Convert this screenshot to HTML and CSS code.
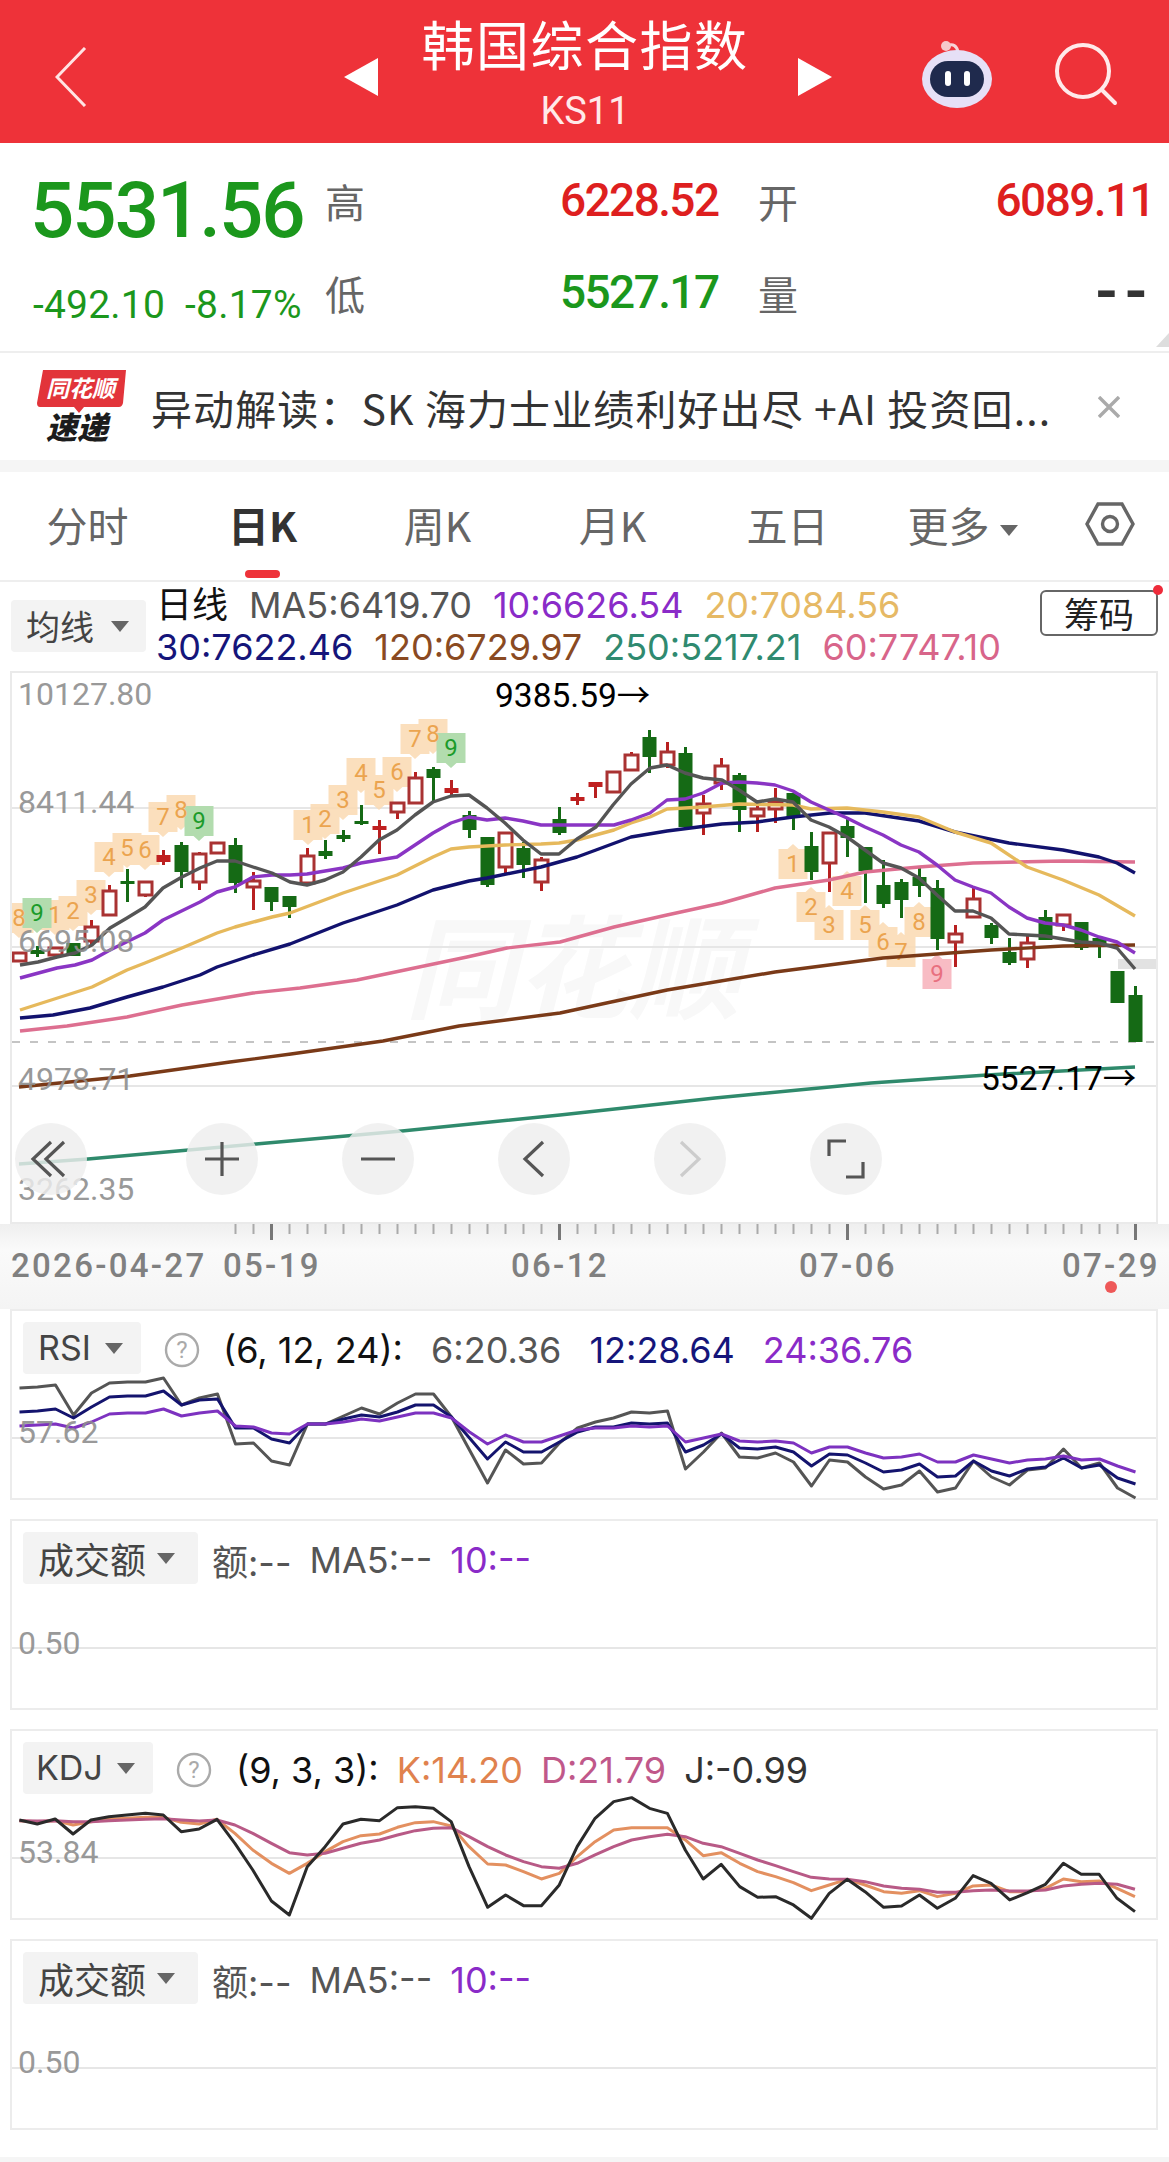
FILE: index.html
```html
<!DOCTYPE html>
<html lang="zh">
<head>
<meta charset="utf-8">
<title>韩国综合指数</title>
<link rel="stylesheet" href="styles.css">
</head>
<body>
<div class="page">
<header class="bar">
  <svg class="back" viewBox="0 0 32 60"><path d="M30 1 2 30l28 29"/></svg>
  <svg class="tri" viewBox="0 0 34 38"><path d="M34 0v38L0 19z"/></svg>
  <div class="title"><div class="name">韩国综合指数</div><div class="code">KS11</div></div>
  <svg class="tri" viewBox="0 0 34 38"><path d="M0 0v38l34-19z"/></svg>
  <svg class="robot" viewBox="0 0 72 72">
    <path class="ant" d="M26 8c6-3 10 0 11 6"/><circle class="ball" cx="25" cy="8" r="5"/>
    <ellipse class="helm" cx="36" cy="41" rx="35" ry="29"/>
    <rect class="face" x="9" y="23" width="54" height="36" rx="18"/>
    <rect class="eye" x="24" y="33" width="6" height="15" rx="3"/><rect class="eye" x="43" y="33" width="6" height="15" rx="3"/>
  </svg>
  <svg class="search" viewBox="0 0 64 64"><circle cx="28" cy="28" r="26"/><path d="m47 47 13 13"/></svg>
</header>

<section class="quote">
  <div class="price down">5531.56</div><div class="qk">高</div><div class="qv up">6228.52</div><div class="qk">开</div><div class="qv up right">6089.11</div>
  <div class="chg down"><span>-492.10</span><span>-8.17%</span></div><div class="qk">低</div><div class="qv down">5527.17</div><div class="qk">量</div><div class="qv dash right">--</div>
  <div class="corner"></div>
</section>

<section class="news">
  <svg class="logo" viewBox="0 0 90 72">
    <path class="logo-red" d="M6 0h83l-3 33q-1 4-4 4H47l-5 6-5-6H3q-3 0-3-4z"/>
    <text class="logo-a" x="9" y="27">同花顺</text><text class="logo-b" x="9" y="69">速递</text>
  </svg>
  <div class="news-text">异动解读：SK 海力士业绩利好出尽 +AI 投资回...</div>
  <svg class="close" viewBox="0 0 22 22"><path d="m1 1 20 20M21 1 1 21"/></svg>
</section>
<div class="strip"></div>

<nav class="tabs">
  <div class="tab">分时</div>
  <div class="tab on">日K<i class="mark"></i></div>
  <div class="tab">周K</div>
  <div class="tab">月K</div>
  <div class="tab">五日</div>
  <div class="tab">更多<b class="caret"></b></div>
  <svg class="hex" viewBox="0 0 50 44"><path d="M13 2h24l11 20-11 20H13L2 22z"/><circle cx="25" cy="22" r="7.5"/></svg>
</nav>

<section class="legend">
  <div class="drop d-ma">均线<b class="caret"></b></div>
  <div class="ma">
    <div class="ma-line"><span class="ink">日线</span><span class="c5">MA5:6419.70</span><span class="c10">10:6626.54</span><span class="c20">20:7084.56</span></div>
    <div class="ma-line"><span class="c30">30:7622.46</span><span class="c120">120:6729.97</span><span class="c250">250:5217.21</span><span class="c60">60:7747.10</span></div>
  </div>
  <div class="chip">筹码<i class="dot"></i></div>
</section>

<section class="chart">
<svg class="plot" viewBox="12 673 1144 549">
  <text class="wm" x="405" y="1010">同花顺</text>
  <path class="grid" d="M12 808H1156M12 947H1156M12 1086H1156"/>
  <path class="dashed" d="M12 1042H1156"/>
  <rect class="tag" x="1118" y="959" width="38" height="10"/>

  <g>
    <path class="b-o" d="M40.500 900h29v30h-9l-5.500 5-5.500-5h-9zM58.500 896h29v30h-9l-5.500 5-5.500-5h-9zM76.500 880h29v30h-9l-5.500 5-5.500-5h-9zM94.500 842h29v30h-9l-5.500 5-5.500-5h-9zM112.500 833h29v30h-9l-5.500 5-5.500-5h-9zM130.500 835h29v30h-9l-5.500 5-5.500-5h-9zM148.500 802h29v30h-9l-5.500 5-5.500-5h-9zM166.500 795h29v30h-9l-5.500 5-5.500-5h-9zM12 903h21.500v30h-9l-5.500 5-5.500-5H12zM293.500 810h29v30h-9l-5.500 5-5.500-5h-9zM310.500 804h29v30h-9l-5.500 5-5.500-5h-9zM328.500 785h29v30h-9l-5.500 5-5.500-5h-9zM346.500 758h29v30h-9l-5.500 5-5.500-5h-9zM364.500 775h29v30h-9l-5.500 5-5.500-5h-9zM382.500 757h29v30h-9l-5.500 5-5.500-5h-9zM400.500 724h29v30h-9l-5.500 5-5.500-5h-9zM418.500 719h29v30h-9l-5.500 5-5.500-5h-9zM778.500 879h29v-30h-9l-5.500-5-5.500 5h-9zM796.500 922h29v-30h-9l-5.500-5-5.500 5h-9zM814.500 940h29v-30h-9l-5.500-5-5.500 5h-9zM832.500 906h29v-30h-9l-5.500-5-5.500 5h-9zM850.500 940h29v-30h-9l-5.500-5-5.500 5h-9zM868.500 957h29v-30h-9l-5.500-5-5.500 5h-9zM886.500 967h29v-30h-9l-5.500-5-5.500 5h-9zM904.500 937h29v-30h-9l-5.500-5-5.500 5h-9z"/>
    <path class="b-g" d="M22.500 898h29v30h-9l-5.500 5-5.500-5h-9zM184.500 806h29v30h-9l-5.500 5-5.500-5h-9zM436.500 733h29v30h-9l-5.500 5-5.500-5h-9z"/>
    <path class="b-p" d="M922.500 989h29v-30h-9l-5.500-5-5.500 5h-9z"/>
    <text class="t-o" x="19" y="926">8</text><text class="t-o" x="55" y="923">1</text><text class="t-o" x="73" y="919">2</text><text class="t-o" x="91" y="903">3</text><text class="t-o" x="109" y="865">4</text><text class="t-o" x="127" y="856">5</text><text class="t-o" x="145" y="858">6</text><text class="t-o" x="163" y="825">7</text><text class="t-o" x="181" y="818">8</text>
    <text class="t-o" x="308" y="833">1</text><text class="t-o" x="325" y="827">2</text><text class="t-o" x="343" y="808">3</text><text class="t-o" x="361" y="781">4</text><text class="t-o" x="379" y="798">5</text><text class="t-o" x="397" y="780">6</text><text class="t-o" x="415" y="747">7</text><text class="t-o" x="433" y="742">8</text>
    <text class="t-o" x="793" y="872">1</text><text class="t-o" x="811" y="915">2</text><text class="t-o" x="829" y="933">3</text><text class="t-o" x="847" y="899">4</text><text class="t-o" x="865" y="933">5</text><text class="t-o" x="883" y="950">6</text><text class="t-o" x="901" y="960">7</text><text class="t-o" x="919" y="930">8</text>
    <text class="t-g" x="37" y="921">9</text><text class="t-g" x="199" y="829">9</text><text class="t-g" x="451" y="756">9</text><text class="t-p" x="937" y="982">9</text>
  </g>

  <path class="w-g" d="M37.500 946V957M127.500 869V902M181.500 842V888M235.500 838V893M271.500 887V911M289.500 896V918M325.500 840V859M343.500 830V842M361.500 805V825M433.500 767V802M469.500 811V838M487.500 837V887M523.500 842V878M559.500 807V835M649.500 730V773M685.500 747V827M739.500 773V832M793.500 793V830M811.500 832V880M847.500 818V857M865.500 847V903M883.500 860V908M901.500 879V918M919.500 868V897M937.500 880V950M991.500 923V944M1009.500 938V965M1045.500 910V940M1081.500 922V950M1099.500 938V958M1135.500 986V1042"/>
  <path class="c-g" d="M30.500 950h14v4h-14zM66.500 943h14v13h-14zM120.500 881h14v3h-14zM174.500 845h14v27h-14zM228.500 845h14v38h-14zM264.500 887h14v15h-14zM282.500 896h14v11h-14zM318.500 851h14v5h-14zM336.500 835h14v4h-14zM354.500 821h14v3h-14zM426.500 769h14v9h-14zM462.500 815h14v15h-14zM480.500 837h14v48h-14zM516.500 848h14v17h-14zM552.500 819h14v14h-14zM642.500 737h14v20h-14zM678.500 753h14v74h-14zM732.500 775h14v35h-14zM786.500 793h14v24h-14zM804.500 846h14v26h-14zM840.500 826h14v12h-14zM858.500 847h14v24h-14zM876.500 885h14v19h-14zM894.500 882h14v18h-14zM912.500 877h14v9h-14zM930.500 888h14v51h-14zM984.500 925h14v13h-14zM1002.500 952h14v11h-14zM1038.500 917h14v23h-14zM1074.500 922h14v26h-14zM1092.500 938h14v7h-14zM1110.500 971h14v32h-14zM1128.500 995h14v47h-14z"/>
  <path class="w-r" d="M91.500 920V945M109.500 885V915M145.500 882V897M199.500 852V890M253.500 872V910M307.500 848V883M397.500 803V819M415.500 772V803M505.500 833V873M541.500 857V891M631.500 752V770M667.500 742V768M703.500 795V835M721.500 758V790M757.500 802V832M775.500 788V823M829.500 832V892M955.500 925V967M973.500 888V917M1027.500 935V968M1063.500 915V931M163.500 850V865M379.500 820V854M451.500 780V795M577.500 793V805M595.500 782V798"/>
  <path class="c-r" d="M13 953h13v8H13zM49 948h13v7H49zM85 927h13v14H85zM103 891h13v24h-13zM139 882h13v13h-13zM193 854h13v28h-13zM211 843h13v10h-13zM247 881h13v6h-13zM301 856h13v27h-13zM391 803h13v9h-13zM409 778h13v25h-13zM499 833h13v34h-13zM535 860h13v22h-13zM607 772h13v20h-13zM625 755h13v15h-13zM661 752h13v13h-13zM697 804h13v9h-13zM715 766h13v17h-13zM751 809h13v7h-13zM769 802h13v7h-13zM823 833h13v30h-13zM949 934h13v8h-13zM967 899h13v18h-13zM1021 943h13v16h-13zM1057 915h13v10h-13z"/>
  <path class="c-s" d="M156.500 855h14v7h-14zM372.500 826h14v4h-14zM444.500 788h14v5h-14zM570.500 797h14v4h-14zM588.500 782h14v5h-14z"/>

  <polyline class="l l250" points="19,1164 88,1159 256,1144 402,1131 560,1115 715,1098 871,1083 987,1075 1135,1067"/>
  <polyline class="l l120" points="19,1087 130,1076 230,1062 291,1054 383,1041 459,1026 560,1013 667,990 775,972 883,958 991,950 1063,946 1135,945"/>
  <polyline class="l l60" points="20,1031 67,1026 127,1017 182,1005 253,993 300,988 357,980 467,957 507,948 560,942 614,927 667,915 722,903 775,888 829,880 865,872 919,867 973,863 1063,861 1135,862"/>
  <polyline class="l l30" points="20,1018 53,1015 90,1008 127,997 163,987 200,975 217,967 253,955 290,944 343,923 397,905 433,890 469,881 487,878 541,867 577,857 596,850 631,837 667,831 722,824 757,822 793,817 830,813 865,813 919,821 955,832 1009,843 1063,850 1099,857 1117,863 1135,873"/>
  <polyline class="l l20" points="20,1010 92,987 127,970 145,963 182,948 217,933 235,927 272,917 290,913 343,893 397,875 433,857 451,849 469,847 505,845 541,844 559,843 577,840 614,830 631,823 650,817 667,809 703,807 739,804 793,805 811,809 847,808 883,812 919,817 955,832 991,843 1027,867 1063,880 1099,895 1135,916"/>
  <polyline class="l l10" points="20,978 57,968 75,965 92,960 110,950 145,933 163,920 200,902 217,892 235,887 253,877 272,875 290,875 307,874 343,868 361,863 397,857 415,845 433,833 451,823 469,817 487,820 505,818 523,821 541,825 559,825 596,825 614,825 631,820 650,813 667,800 685,799 703,793 722,783 739,782 757,783 775,785 793,791 811,802 829,810 847,818 865,827 883,835 901,845 919,852 937,865 955,880 973,887 991,893 1009,907 1027,918 1045,923 1063,925 1081,930 1099,937 1117,942 1135,953"/>
  <polyline class="l l5" points="20,965 38,962 57,957 75,953 92,945 110,928 127,918 145,907 163,888 182,877 200,868 217,861 235,861 253,867 272,873 290,882 307,885 325,880 343,872 361,857 379,840 397,830 415,815 433,802 451,796 469,795 487,808 505,823 523,840 541,854 559,854 577,839 596,827 613,805 631,784 650,768 667,765 685,773 703,778 722,780 739,790 757,802 775,799 793,802 811,820 829,827 847,837 865,850 883,863 901,868 919,878 937,895 955,911 973,911 991,918 1009,934 1027,935 1045,936 1063,939 1081,942 1099,943 1117,948 1135,969"/>

  <text class="ax" x="18" y="705">10127.80</text>
  <text class="ax" x="18" y="813">8411.44</text>
  <text class="ax" x="18" y="952">6695.08</text>
  <text class="ax" x="18" y="1090">4978.71</text>
  <text class="ax" x="18" y="1200">3262.35</text>
  <text class="hl" x="495" y="707">9385.59→</text>
  <text class="hl" x="981" y="1090">5527.17→</text>
</svg>
<div class="nav">
  <div class="nav-b first"><svg viewBox="0 0 72 72"><path d="M36 19 18 36l18 17M49 19 31 36l18 17"/></svg></div>
  <div class="nav-b"><svg viewBox="0 0 72 72"><path d="M36 19v34M19 36h34"/></svg></div>
  <div class="nav-b"><svg viewBox="0 0 72 72"><path d="M19 36h34"/></svg></div>
  <div class="nav-b"><svg viewBox="0 0 72 72"><path d="M45 19 27 36l18 17"/></svg></div>
  <div class="nav-b off"><svg viewBox="0 0 72 72"><path d="M27 19l18 17-18 17"/></svg></div>
  <div class="nav-b"><svg viewBox="0 0 72 72"><path d="M19 33V18h17M53 39v15H36"/></svg></div>
</div>
</section>

<section class="axis">
<svg viewBox="0 1224 1169 85">
  <path class="tk" d="M235.500 1224v10M253.500 1224v10M289.500 1224v10M307.500 1224v10M325.500 1224v10M343.500 1224v10M361.500 1224v10M379.500 1224v10M397.500 1224v10M415.500 1224v10M433.500 1224v10M451.500 1224v10M469.500 1224v10M487.500 1224v10M505.500 1224v10M523.500 1224v10M541.500 1224v10M577.500 1224v10M595.500 1224v10M613.500 1224v10M631.500 1224v10M649.500 1224v10M667.500 1224v10M685.500 1224v10M703.500 1224v10M721.500 1224v10M739.500 1224v10M757.500 1224v10M775.500 1224v10M793.500 1224v10M811.500 1224v10M829.500 1224v10M865.500 1224v10M883.500 1224v10M901.500 1224v10M919.500 1224v10M937.500 1224v10M955.500 1224v10M973.500 1224v10M991.500 1224v10M1009.500 1224v10M1027.500 1224v10M1045.500 1224v10M1063.500 1224v10M1081.500 1224v10M1099.500 1224v10M1117.500 1224v10"/>
  <path class="tk-m" d="M271.500 1224v16M559.500 1224v16M847.500 1224v16M1135.500 1224v16"/>
  <text class="dt" x="11" y="1277">2026-04-27</text>
  <text class="dt" x="223" y="1277">05-19</text>
  <text class="dt" x="511" y="1277">06-12</text>
  <text class="dt" x="799" y="1277">07-06</text>
  <text class="dt" x="1062" y="1277">07-29</text>
  <circle class="rd" cx="1111" cy="1287" r="6"/>
</svg>
</section>

<section class="panels">
<div class="panel">
  <div class="phead rsi">
    <div class="drop d-rsi">RSI<b class="caret"></b></div>
    <svg class="help" viewBox="0 0 36 36"><circle cx="18" cy="18" r="16"/><text x="18" y="26">?</text></svg>
    <span class="ink">(6, 12, 24):</span><span class="c5">6:20.36</span><span class="c30">12:28.64</span><span class="c10">24:36.76</span>
  </div>
  <svg class="sub" viewBox="12 1378 1144 120">
    <path class="grid" d="M12 1438H1156"/>
    <polyline class="s sg" points="19.5,1388 37.5,1387 55.5,1385 73.5,1415 91.5,1393 109.500,1383 127.500,1382 145.500,1382 163.500,1378 181.500,1405 199.500,1398 217.500,1394 235.500,1444 253.500,1443 271.500,1461 289.500,1465 307.500,1424 325.500,1424 343.500,1416 361.500,1408 379.500,1414 397.500,1403 415.500,1394 433.500,1394 451.500,1417 469.500,1450 487.500,1483 505.500,1450 523.500,1464 541.500,1463 559.500,1443 577.500,1428 595.500,1422 613.5,1418 631.5,1412 649.5,1413 667.5,1411 685.5,1469 703.5,1452 721.5,1433 739.5,1457 757.5,1458 775.5,1453 793.5,1462 811.5,1486 829.5,1460 847.5,1462 865.5,1477 883.5,1489 901.5,1485 919.5,1471 937.5,1492 955.5,1488 973.5,1461 991.5,1477 1009.5,1485 1027.5,1470 1045.5,1468 1063.5,1449 1081.5,1468 1099.5,1463 1117.5,1488 1135.5,1498"/>
    <polyline class="s sn" points="19.5,1412 37.5,1411 55.5,1409 73.5,1418 91.5,1407 109.5,1397 127.5,1396 145.5,1396 163.5,1391 181.5,1405 199.5,1400 217.5,1399 235.5,1428 253.5,1428 271.5,1439 289.5,1443 307.5,1424 325.5,1424 343.5,1419 361.5,1415 379.5,1417 397.5,1412 415.5,1405 433.5,1405 451.5,1417 469.5,1438 487.5,1459 505.5,1442 523.5,1452 541.5,1452 559.5,1442 577.5,1432 595.5,1427 613.5,1427 631.5,1423 649.5,1424 667.5,1423 685.5,1452 703.5,1445 721.5,1434 739.5,1448 757.5,1449 775.5,1447 793.5,1452 811.5,1466 829.5,1454 847.5,1455 865.5,1463 883.5,1472 901.5,1470 919.5,1464 937.5,1477 955.5,1476 973.5,1461 991.5,1471 1009.5,1476 1027.5,1469 1045.5,1467 1063.5,1458 1081.5,1468 1099.5,1465 1117.5,1478 1135.5,1484"/>
    <polyline class="s sp" points="19.5,1426 37.5,1425 55.5,1424 73.5,1428 91.5,1422 109.5,1414 127.5,1413 145.5,1413 163.5,1409 181.5,1416 199.5,1413 217.5,1411 235.5,1426 253.5,1427 271.5,1433 289.5,1434 307.5,1424 325.5,1424 343.5,1422 361.5,1419 379.5,1421 397.5,1417 415.5,1413 433.5,1413 451.5,1418 469.5,1432 487.5,1444 505.5,1435 523.5,1442 541.5,1442 559.5,1436 577.5,1430 595.5,1428 613.5,1428 631.5,1426 649.5,1427 667.5,1426 685.5,1442 703.5,1438 721.5,1434 739.5,1441 757.5,1442 775.5,1441 793.5,1443 811.5,1453 829.5,1447 847.5,1447 865.5,1453 883.5,1458 901.5,1457 919.5,1454 937.5,1462 955.5,1462 973.5,1455 991.5,1459 1009.5,1463 1027.5,1460 1045.5,1459 1063.5,1456 1081.5,1460 1099.5,1459 1117.5,1466 1135.5,1472"/>
    <text class="ax" x="18" y="1443">57.62</text>
  </svg>
</div>

<div class="panel">
  <div class="phead vol">
    <div class="drop d-vol">成交额<b class="caret"></b></div>
    <span class="c5">额:--</span><span class="c5">MA5:--</span><span class="c10">10:--</span>
  </div>
  <svg class="sub" viewBox="12 1588 1144 120">
    <path class="grid" d="M12 1648H1156"/>
    <text class="ax" x="18" y="1654">0.50</text>
  </svg>
</div>

<div class="panel">
  <div class="phead kdj">
    <div class="drop d-kdj">KDJ<b class="caret"></b></div>
    <svg class="help" viewBox="0 0 36 36"><circle cx="18" cy="18" r="16"/><text x="18" y="26">?</text></svg>
    <span class="ink">(9, 3, 3):</span><span class="ck">K:14.20</span><span class="cd">D:21.79</span><span class="cj">J:-0.99</span>
  </div>
  <svg class="sub" viewBox="12 1798 1144 120">
    <path class="grid" d="M12 1858H1156"/>
    <g transform="translate(0 1700) scale(.7457 .3333)">
      <polyline class="s kk" vector-effect="non-scaling-stroke" points="26,362 50,365 74,362 98,375 122,365 146,358 170,355 195,352 219,352 243,367 267,372 291,358 315,400 339,450 364,490 388,520 412,490 436,455 460,425 484,407 509,402 533,382 557,368 581,365 605,378 629,440 654,492 678,495 702,515 726,537 750,520 774,470 798,425 823,390 847,383 871,383 895,383 919,420 943,467 967,458 992,490 1016,515 1040,530 1064,548 1088,572 1112,555 1136,538 1160,555 1185,575 1209,580 1233,572 1257,590 1281,580 1305,558 1329,555 1354,575 1378,575 1402,565 1426,537 1450,545 1474,543 1498,565 1522,590"/>
      <polyline class="s kd" vector-effect="non-scaling-stroke" points="26,362 50,363 74,362 98,365 122,365 146,362 170,360 195,358 219,356 243,360 267,363 291,360 315,375 339,400 364,430 388,458 412,465 436,460 460,445 484,430 509,420 533,405 557,392 581,385 605,383 629,410 654,440 678,465 702,485 726,500 750,505 774,490 798,465 823,440 847,420 871,410 895,403 919,410 943,430 967,440 992,460 1016,480 1040,497 1064,515 1088,532 1112,537 1136,538 1160,545 1185,558 1209,565 1233,568 1257,577 1281,577 1305,572 1329,570 1354,573 1378,573 1402,570 1426,558 1450,553 1474,550 1498,553 1522,568"/>
      <polyline class="s kj" vector-effect="non-scaling-stroke" points="26,360 50,372 74,357 98,402 122,360 146,350 170,345 195,340 219,345 243,395 267,387 291,358 315,430 339,510 364,603 388,645 412,500 436,440 460,372 484,358 509,362 533,323 557,320 581,325 605,365 629,500 654,622 678,585 702,617 726,617 750,555 774,440 798,355 823,305 847,293 871,325 895,340 919,450 943,537 967,493 992,560 1016,592 1040,590 1064,615 1088,655 1112,580 1136,538 1160,575 1185,622 1209,618 1233,585 1257,625 1281,595 1305,527 1329,550 1354,600 1378,578 1402,553 1426,490 1450,523 1474,523 1498,595 1522,635"/>
    </g>
    <text class="ax" x="18" y="1863">53.84</text>
  </svg>
</div>

<div class="panel">
  <div class="phead vol">
    <div class="drop d-vol">成交额<b class="caret"></b></div>
    <span class="c5">额:--</span><span class="c5">MA5:--</span><span class="c10">10:--</span>
  </div>
  <svg class="sub" viewBox="12 2008 1144 120">
    <path class="grid" d="M12 2068H1156"/>
    <text class="ax" x="18" y="2073">0.50</text>
  </svg>
</div>
</section>
<div class="foot"></div>
<div class="tail"></div>
</div>
</body>
</html>
```
FILE: styles.css
```css
*{box-sizing:border-box}
html,body{margin:0;padding:0;background:#fff}
body{font-family:"Inter","Noto Sans CJK SC",sans-serif;color:#222}
.page{width:1169px;height:2162px;overflow:hidden;background:#fff}
svg text{font-family:"Roboto","Noto Sans CJK SC",sans-serif}

.bar{height:143px;background:#ee3239;display:flex;align-items:center}
.back{width:32px;height:60px;margin:10px 0 0 55px;flex:none}
.back path{fill:none;stroke:#ffe4e4;stroke-width:3}
.tri{width:34px;height:38px;margin-top:10px;flex:none}
.tri:nth-of-type(2){margin-left:257px}
.tri path{fill:#fff}
.title{width:420px;padding-right:6px;text-align:center;color:#fff;align-self:flex-start}
.name{font:400 53px/60px "Noto Sans CJK SC",sans-serif;margin-top:13px;letter-spacing:1.500px}
.code{font:400 38px/46px "Roboto",sans-serif;color:#ffe9e9;margin-top:15px}
.robot{width:72px;height:72px;margin:4px 0 0 89px;flex:none}
.ant{fill:none;stroke:#f7d4d8;stroke-width:3}
.ball{fill:#f6c9cc}
.helm{fill:#e6e0f6}
.face{fill:#1f2a4d}
.eye{fill:#fff}
.search{width:64px;height:64px;margin:6px 0 0 62px;flex:none}
.search circle,.search path{fill:none;stroke:#ffeaea;stroke-width:4;stroke-linecap:round}

.quote{position:relative;height:210px;padding:12px 15px 0 30px;display:grid;grid-template-columns:295px 235px 198px 50px 1fr;grid-template-rows:92px 92px;border-bottom:2px solid #eee;align-items:center}
.price{font:500 78px/92px "Roboto",sans-serif;letter-spacing:-2px;margin-top:20px}
.chg{font:400 39px/40px "Roboto",sans-serif;display:flex;gap:20px;margin:24px 0 0 3px;letter-spacing:.2px;white-space:nowrap}
.qk{font:400 40px/48px "Noto Sans CJK SC",sans-serif;color:#666}
.qv{font:500 46px/50px "Roboto",sans-serif;letter-spacing:-1.600px;margin-top:-2px}
.right{text-align:right}
.up{color:#de1f1f}
.down{color:#1b971c}
.dash{font-size:60px;font-weight:700;color:#333;letter-spacing:6px;line-height:50px}
.corner{position:absolute;right:0;bottom:4px;width:0;height:0;border-left:13px solid transparent;border-bottom:14px solid #ddd}

.news{height:107px;display:flex;align-items:center;padding-left:37px}
.logo{width:90px;height:72px;flex:none;margin-top:-2px;overflow:visible}
.logo-red{fill:#e2343a}
.logo-a{font-size:23px;font-weight:700;font-style:italic;fill:#fff}
.logo-b{font-size:31px;font-weight:900;font-style:italic;fill:#1c1c1c}
.news-text{font:400 41px/50px "Noto Sans CJK SC",sans-serif;color:#333;margin-left:24px;width:925px;white-space:nowrap;letter-spacing:1.100px}
.close{width:22px;height:22px;margin-left:22px;flex:none}
.close path{stroke:#aaa;stroke-width:3.400;fill:none}
.strip{height:12px;background:#f5f5f5}

.tabs{height:110px;display:flex;border-bottom:2px solid #eee;align-items:center}
.tab{position:relative;width:175px;text-align:center;font:400 41px/50px "Noto Sans CJK SC",sans-serif;color:#666;margin-top:-4px}
.tab.on{font-weight:700;color:#333}
.mark{position:absolute;left:70px;top:71px;width:35px;height:8px;border-radius:4px;background:#ee3239}
.caret{display:inline-block;width:0;height:0;border:9px solid transparent;border-top:11px solid #666;border-bottom:0;margin-left:10px;vertical-align:middle}
.hex{width:50px;height:44px;margin:-5px 0 0 35px;flex:none}
.hex path,.hex circle{fill:none;stroke:#666;stroke-width:3.400}

.legend{height:89px;display:flex;position:relative;padding-left:11px}
.drop{height:52px;background:#f3f3f3;border-radius:4px;display:flex;align-items:center;font:400 34px/40px "Noto Sans CJK SC",sans-serif;color:#444;flex:none}
.drop .caret{border-top-color:#666}
.d-ma{width:135px;margin-top:18px;padding-left:15px}
.d-ma .caret{margin-left:17px}
.ma{margin-left:10px;font-size:36px;line-height:42px;margin-top:2px;white-space:nowrap}
.ma-line{display:flex;gap:21px}
.ink{color:#111}
.c5{color:#555}.c10{color:#8a2bc8}.c20{color:#e6b965}.c30{color:#15157a}.c120{color:#8a4a22}.c250{color:#2f8a70}.c60{color:#d8658a}
.ck{color:#e0824e}.cd{color:#c0588a}.cj{color:#333}
.chip{position:absolute;left:1040px;top:8px;width:118px;height:46px;border:2px solid #666;border-radius:6px;font:400 35px/42px "Noto Sans CJK SC",sans-serif;text-align:center;color:#222}
.dot{position:absolute;right:-7px;top:-7px;width:10px;height:10px;border-radius:50%;background:#ee2b3a}

.chart{position:relative;width:1148px;height:553px;margin-left:10px;border:2px solid #eaeaea}
.plot{display:block;width:1144px;height:549px}
.wm{font:italic 700 112px "Noto Sans CJK SC",sans-serif;fill:#f8f8f8}
.grid{stroke:#e6e6e6;stroke-width:2;fill:none}
.dashed{stroke:#c4c4c4;stroke-width:2;stroke-dasharray:8 10;fill:none}
.tag{fill:#e2e2e2}
.b-o{fill:#fad9b2;opacity:.85}
.b-g{fill:#b2dcae}
.b-p{fill:#f8bcc4}
.t-o,.t-g,.t-p{font-size:24px;text-anchor:middle}
.t-o{fill:#eba44f}.t-g{fill:#1b9b2a}.t-p{fill:#e8707f}
.w-g{stroke:#156a15;stroke-width:3;fill:none}
.c-g{fill:#156a15}
.w-r{stroke:#b82020;stroke-width:3;fill:none}
.c-r{fill:#fff;stroke:#a93232;stroke-width:3}
.c-s{fill:#c02020}
.l{fill:none;stroke-width:3.400;stroke-linejoin:round}
.l5{stroke:#555}.l10{stroke:#8a35c4}.l20{stroke:#e6b95c}.l30{stroke:#12126e}.l60{stroke:#dd6f90}.l120{stroke:#7a3a18}.l250{stroke:#2f8a6c}
.ax{font-size:32px;fill:#8f8f8f;opacity:.9}
.hl{font-size:33.500px;fill:#000}

.nav{position:absolute;left:3px;top:450px;display:flex;gap:84px}
.nav-b{width:72px;height:72px;border-radius:50%;background:rgba(238,238,238,.82)}
.nav-b.first{margin-right:15px}
.nav-b svg{display:block;width:72px;height:72px}
.nav-b path{fill:none;stroke:#555;stroke-width:3.200}
.nav-b.off path{stroke:#ccc}

.axis{height:85px;background:linear-gradient(#efefef,#fafafa 30%,#f4f4f4)}
.axis svg{display:block;width:1169px;height:85px}
.tk{stroke:#aaa;stroke-width:2;fill:none}
.tk-m{stroke:#777;stroke-width:3;fill:none}
.dt{font-size:33px;font-weight:500;fill:#808080;letter-spacing:2.300px}
.rd{fill:#ee5858}

.panels{display:flex;flex-direction:column;gap:19px;margin-left:10px;width:1148px}
.panel{height:191px;border:2px solid #ececec}
.phead{height:67px;padding:11px 0 0 11px;display:flex;align-items:center;font-size:36px;white-space:nowrap}
.rsi{gap:28px}
.vol,.kdj{gap:18px}
.phead .drop{align-self:flex-start}
.d-rsi{width:118px;padding-left:15px;font-family:"Inter",sans-serif;font-size:34px}
.d-kdj{width:130px;padding-left:13px;font-family:"Inter",sans-serif;font-size:34px}
.d-vol{width:175px;padding-left:15px;margin-right:-4px;font-size:36px}
.d-vol .caret{margin-left:11px}
.d-rsi .caret,.d-kdj .caret{margin-left:14px}
.help{width:36px;height:36px;flex:none}
.rsi .help{margin:0 -5px 0 -5px}
.kdj .help{margin:0 6px 0 5px}
.help circle{fill:none;stroke:#aaa;stroke-width:2.400}
.help text{font-size:24px;text-anchor:middle;fill:#aaa}
.sub{display:block;width:1144px;height:120px;overflow:visible}
.s{fill:none;stroke-width:3;stroke-linejoin:round}
.sg{stroke:#555}.sn{stroke:#14146e}.sp{stroke:#7d32c0}
.kk{stroke:#e39060}.kd{stroke:#b85a86}.kj{stroke:#2a2a2a}
.foot{height:27px;background:#fff}
.tail{height:5px;background:#f5f5f5}
```
